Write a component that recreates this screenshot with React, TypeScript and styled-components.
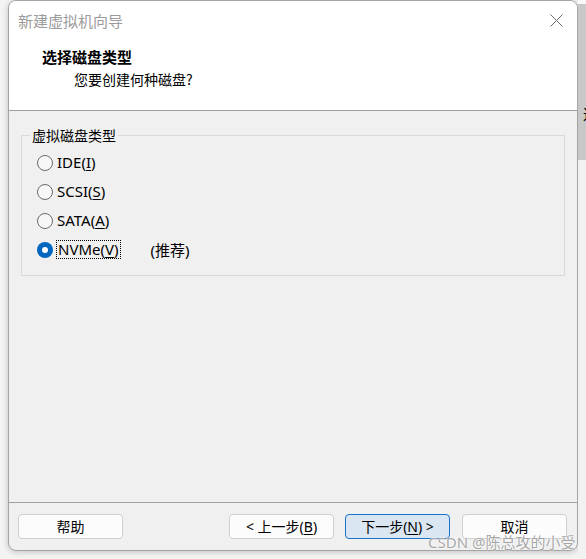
import React from "react";
import styled, { createGlobalStyle } from "styled-components";

const Global = createGlobalStyle`
  html, body { margin: 0; padding: 0; background: #f4f4f4; }
  body { font-family: "Noto Sans", "Noto Sans CJK SC", sans-serif; }
  * { box-sizing: border-box; }
`;

const Page = styled.div`
  width: 586px;
  height: 559px;
  display: flex;
  align-items: flex-start;
  padding-left: 8px;
  background: #f4f4f4;
  overflow: hidden;
  position: relative;
`;

const Window = styled.div`
  width: 570px;
  height: 551px;
  border: 1px solid #a4a4a4;
  border-radius: 8px;
  background: #f0f0f0;
  box-shadow: 0 1px 6px rgba(0, 0, 0, 0.22);
  display: flex;
  flex-direction: column;
  overflow: hidden;
  flex-shrink: 0;
`;

const Header = styled.div`
  height: 110px;
  background: #ffffff;
  border-bottom: 1px solid #a0a0a0;
  display: flex;
  flex-direction: column;
`;

const TitleBar = styled.div`
  height: 38px;
  display: flex;
  align-items: center;
  justify-content: space-between;
  padding: 0 14px 0 9px;
`;

const Title = styled.span`
  font-family: "Noto Sans CJK SC", sans-serif;
  font-size: 15px;
  color: #9b9b9b;
`;

const Heading = styled.div`
  margin: 8px 0 0 33px;
  font-family: "Noto Sans CJK SC", sans-serif;
  font-size: 15px;
  font-weight: 700;
  line-height: 20px;
  color: #000;
`;

const SubHeading = styled.div`
  margin: 2px 0 0 65px;
  font-family: "Noto Sans CJK SC", sans-serif;
  font-size: 14px;
  line-height: 20px;
  color: #000;
`;

const Body = styled.div`
  flex: 1;
  padding: 15px 12px 0 12px;
`;

const Group = styled.fieldset`
  margin: 0;
  padding: 0;
  border: 1px solid #dadada;
`;

const Legend = styled.legend`
  margin-left: 8px;
  padding: 0 2px;
  font-family: "Noto Sans CJK SC", sans-serif;
  font-size: 14px;
  line-height: 18px;
  color: #000;
`;

const Options = styled.div`
  display: flex;
  flex-direction: column;
  padding: 4px 0 11px 15px;
`;

const Row = styled.div`
  height: 29px;
  display: flex;
  align-items: center;
`;

const Radio = styled.span<{ $checked?: boolean }>`
  width: 16px;
  height: 16px;
  border-radius: 50%;
  flex-shrink: 0;
  display: flex;
  align-items: center;
  justify-content: center;
  border: ${(p) => (p.$checked ? "none" : "1px solid #6b6b6b")};
  background: ${(p) => (p.$checked ? "#0067c0" : "#f7f7f7")};
  &::after {
    content: "";
    display: ${(p) => (p.$checked ? "block" : "none")};
    width: 6px;
    height: 6px;
    border-radius: 50%;
    background: #ffffff;
  }
`;

const Label = styled.span<{ $focused?: boolean }>`
  margin-left: ${(p) => (p.$focused ? "3px" : "4px")};
  padding: 0 ${(p) => (p.$focused ? "1px" : "0")};
  border: ${(p) => (p.$focused ? "1px dotted #000" : "none")};
  font-size: 15px;
  line-height: 17px;
  color: #000;
  u { text-underline-offset: 2px; }
`;

const Note = styled.span`
  margin-left: 30px;
  font-family: "Noto Sans", "Noto Sans CJK SC", sans-serif;
  font-size: 15px;
  color: #000;
`;

const Footer = styled.div`
  height: 48px;
  border-top: 1px solid #a0a0a0;
  display: flex;
  align-items: flex-start;
  padding: 11px 10px 0 9px;
  gap: 11px;
`;

const Spacer = styled.div`
  flex: 1;
`;

const Button = styled.button<{ $primary?: boolean }>`
  width: 105px;
  height: 25px;
  border-radius: 4px;
  border: 1px solid ${(p) => (p.$primary ? "#1a73c8" : "#cfcfcf")};
  background: ${(p) => (p.$primary ? "#dae6f2" : "#fcfcfc")};
  font-family: "Noto Sans", "Noto Sans CJK SC", sans-serif;
  font-size: 14px;
  line-height: 20px;
  color: #000;
  padding: 0;
  display: flex;
  align-items: center;
  justify-content: center;
  u { text-underline-offset: 2px; }
`;

const CancelButton = styled(Button)`
  margin-left: 1px;
`;

const Side = styled.div`
  width: 9px;
  height: 559px;
  display: flex;
  flex-direction: column;
  flex-shrink: 0;
`;

const SideTop = styled.div`
  height: 4px;
  background: #fafafa;
`;

const SideBar = styled.div`
  height: 156px;
  background: #c8c8c8;
  display: flex;
  align-items: flex-start;
  padding-top: 102px;
  padding-left: 5px;
  overflow: hidden;
`;

const SideGlyph = styled.span`
  font-family: "Noto Sans CJK SC", sans-serif;
  font-size: 15px;
  line-height: 16px;
  color: #000;
  white-space: nowrap;
`;

const SideRest = styled.div`
  flex: 1;
  background: #f2f2f2;
`;

const Watermark = styled.div`
  position: absolute;
  left: 428px;
  top: 532px;
  font-family: "Noto Sans", "Noto Sans CJK SC", sans-serif;
  font-size: 15px;
  line-height: 20px;
  color: rgba(150, 150, 150, 0.85);
  text-shadow: 0 0 1px #fff, 0 0 2px #fff;
  white-space: nowrap;
  pointer-events: none;
`;

const CloseIcon = () => (
  <svg width="13" height="13" viewBox="0 0 13 13">
    <path d="M0.5 0.5 L12.5 12.5 M12.5 0.5 L0.5 12.5" stroke="#6e6e6e" strokeWidth="1" fill="none" />
  </svg>
);

const options = [
  { name: "IDE", key: "I" },
  { name: "SCSI", key: "S" },
  { name: "SATA", key: "A" },
];

export default function App() {
  return (
    <>
      <Global />
      <Page>
        <Window>
          <Header>
            <TitleBar>
              <Title>新建虚拟机向导</Title>
              <CloseIcon />
            </TitleBar>
            <Heading>选择磁盘类型</Heading>
            <SubHeading>您要创建何种磁盘?</SubHeading>
          </Header>
          <Body>
            <Group>
              <Legend>虚拟磁盘类型</Legend>
              <Options>
                {options.map((o) => (
                  <Row key={o.name}>
                    <Radio />
                    <Label>
                      {o.name}(<u>{o.key}</u>)
                    </Label>
                  </Row>
                ))}
                <Row>
                  <Radio $checked />
                  <Label $focused>
                    NVMe(<u>V</u>)
                  </Label>
                  <Note>(推荐)</Note>
                </Row>
              </Options>
            </Group>
          </Body>
          <Footer>
            <Button>帮助</Button>
            <Spacer />
            <Button>&lt; 上一步(<u>B</u>)</Button>
            <Button $primary>
              下一步(<u>N</u>) &gt;
            </Button>
            <CancelButton>取消</CancelButton>
          </Footer>
        </Window>
        <Side>
          <SideTop />
          <SideBar>
            <SideGlyph>这</SideGlyph>
          </SideBar>
          <SideRest />
        </Side>
        <Watermark>CSDN @陈总攻的小受</Watermark>
      </Page>
    </>
  );
}
